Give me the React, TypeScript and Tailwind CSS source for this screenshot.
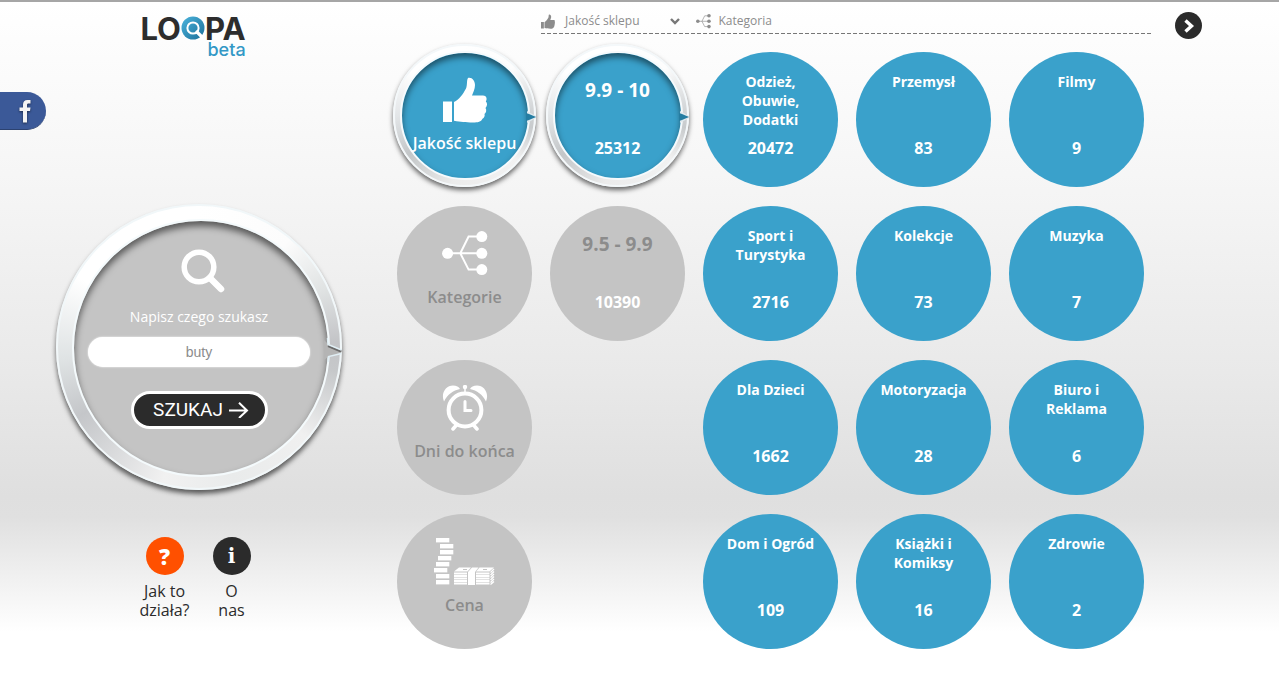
import { useState } from "react";
import clsx from "clsx";

const FACETS = [
  { id: "quality", label: "Jakość sklepu", Icon: ThumbIcon },
  { id: "category", label: "Kategorie", Icon: TreeIcon },
  { id: "days", label: "Dni do końca", Icon: ClockIcon },
  { id: "price", label: "Cena", Icon: MoneyIcon },
];

const RANGES = [
  { label: "9.9 - 10", count: 25312 },
  { label: "9.5 - 9.9", count: 10390 },
];

const CATEGORIES = [
  [
    { label: "Odzież, Obuwie, Dodatki", count: 20472 },
    { label: "Sport i Turystyka", count: 2716 },
    { label: "Dla Dzieci", count: 1662 },
    { label: "Dom i Ogród", count: 109 },
  ],
  [
    { label: "Przemysł", count: 83 },
    { label: "Kolekcje", count: 73 },
    { label: "Motoryzacja", count: 28 },
    { label: "Książki i Komiksy", count: 16 },
  ],
  [
    { label: "Filmy", count: 9 },
    { label: "Muzyka", count: 7 },
    { label: "Biuro i Reklama", count: 6 },
    { label: "Zdrowie", count: 2 },
  ],
];

function ThumbIcon({ className = "" }: { className?: string }) {
  return (
    <svg viewBox="0 0 44 46" className={className} fill="currentColor" aria-hidden="true">
      <path d="M0 24.5h9V45H0z" />
      <path d="M11 25C16 23 20 17 23 11.500C24.500 8 23.500 3 25 1C29 0 32 4 32 8C32 12 30 16 29 18.500L40 18.500C43.500 18.500 44.500 22 42.800 24.500C44.500 26 44.500 29 42.500 31C43.800 33 43.300 35.500 41.500 37C42.200 39 41 41 39.500 41.800C38 45 35 45.500 30 45.500C22 45.500 18 45 11 43.800Z" />
    </svg>
  );
}

function TreeIcon({ className = "" }: { className?: string }) {
  return (
    <svg viewBox="0 0 46 46" className={className} fill="currentColor" aria-hidden="true">
      <path d="M5.600 22.300H39.600M39.600 5.600H26.600L18.300 22.300L26.600 38.600H39.600" fill="none" stroke="currentColor" strokeWidth="2" />
      <circle cx="5.600" cy="22.300" r="5.500" />
      <circle cx="39.800" cy="5.600" r="5.500" />
      <circle cx="39.800" cy="22.300" r="5.500" />
      <circle cx="39.800" cy="38.600" r="5.500" />
    </svg>
  );
}

function ClockIcon({ className = "" }: { className?: string }) {
  return (
    <svg viewBox="0 0 46 46" className={className} fill="currentColor" aria-hidden="true">
      <circle cx="23" cy="25" r="16.400" fill="none" stroke="currentColor" strokeWidth="4" />
      <path d="M23 16.500V25.500H29" fill="none" stroke="currentColor" strokeWidth="3" strokeLinecap="round" />
      <path d="M2 16.500C-1.500 8 4 .5 11 .5C14.500 .5 17 2 18 4C11 5.500 5.500 9.500 2 16.500Z" />
      <path d="M44 16.500C47.500 8 42 .5 35 .5C31.500 .5 29 2 28 4C35 5.500 40.500 9.500 44 16.500Z" />
      <circle cx="23" cy="2" r="2.200" />
      <path d="M23 2V8" stroke="currentColor" strokeWidth="1.500" />
      <path d="M14.500 40L11 44M31.500 40L35 44" stroke="currentColor" strokeWidth="3.500" strokeLinecap="round" />
    </svg>
  );
}

function MoneyIcon({ className = "" }: { className?: string }) {
  const offsets = [2, 6, 6, 4, 2, 0, 2, 2];
  return (
    <svg viewBox="0 0 61 48" className={className} fill="currentColor" aria-hidden="true">
      {offsets.map((x, i) => (
        <rect key={i} x={x} y={1 + i * 6} width="13.300" height="4.400" />
      ))}
      <path d="M20 34.500L25 30.500H37L33.500 34.500ZM42 34.500L45.500 30.500H60L55.500 34.500Z" />
      <path d="M34 48V35L38 30.500H44.500L41 35V48Z" />
      {[35.5, 38, 40.5, 43, 45.5].map((y) => (
        <path key={y} d={`M20 ${y}h13v1.900H20zM42 ${y}h13.500v1.900H42z`} />
      ))}
      <path d="M56.500 35.500L60 32M56.500 38L60 34.500M56.500 40.500L60 37M56.500 43L60 39.500M56.500 45.500L60 42M56.500 47.500L60 44.500" stroke="currentColor" strokeWidth="1.300" />
      <path d="M29 32.500h4M49 32.500h4" stroke="#c4c4c4" strokeWidth="1" />
    </svg>
  );
}

function Logo() {
  return (
    <a href="#" aria-label="Loopa beta" className="flex flex-col items-end pr-3 font-['Inter'] leading-none">
      <span className="flex h-8 items-center text-[31px] font-bold text-[#2d2d2d]">
        LO
        <svg viewBox="0 0 24 24" className="size-6" aria-hidden="true">
          <defs>
            <linearGradient id="lens" x1="0" y1="0" x2="1" y2="1">
              <stop offset="0" stopColor="#4bb4dc" />
              <stop offset="1" stopColor="#1c6f99" />
            </linearGradient>
          </defs>
          <circle cx="12" cy="12" r="11.500" fill="url(#lens)" />
          <circle cx="12" cy="12" r="5.600" fill="none" stroke="#fff" strokeWidth="2" />
          <path d="M16 16l5 5" stroke="#fff" strokeWidth="3.200" strokeLinecap="round" />
        </svg>
        PA
      </span>
      <span className="h-3 text-lg leading-3 font-medium text-[#3398c6]">beta</span>
    </a>
  );
}

// metal ring around the selected bubble, open on the side of the next column
function SmallRing() {
  return (
    <span className="absolute -top-2 -left-1 size-[143px] rounded-full border-2 border-[#f4f8fa] bg-[conic-gradient(#fff_0deg,#fdfdfd_45deg,#d2d5d7_85deg,#c8cbcd_100deg,#f2f2f2_130deg,#ececec_190deg,#c3c6c8_235deg,#e3e6e8_270deg,#fff_310deg)] pt-[5px] pr-1 pb-[5px] pl-[5px] shadow-[0_3px_5px_rgba(0,0,0,0.6)]">
      <span className="block size-full rounded-full border-2 border-[#f6fafc] bg-[#3aa1cb] shadow-[inset_0_4px_6px_rgba(0,0,0,0.5)]" />
      <svg viewBox="0 0 10 12" className="absolute top-[65px] -right-[2px] h-3 w-[10px]" aria-hidden="true">
        <path d="M1 0L10 5V7L1 12Z" fill="#dfe9ee" />
        <path d="M0 2L3 3L10 6L3 9L0 10Z" fill="#257da2" />
      </svg>
    </span>
  );
}

function Bubble({
  tone,
  selected = false,
  onClick,
  children,
}: {
  tone: "blue" | "gray";
  selected?: boolean;
  onClick?: () => void;
  children: React.ReactNode;
}) {
  return (
    <button
      type="button"
      onClick={onClick}
      className={clsx(
        "relative size-[135px] cursor-pointer rounded-full text-center",
        selected ? "text-white" : tone === "blue" ? "bg-[#3aa1cb] text-white" : "bg-[#c4c4c4] text-[#8c8c8c]"
      )}
    >
      {selected && <SmallRing />}
      <span className="relative flex h-full flex-col items-center">{children}</span>
    </button>
  );
}

function SearchDial() {
  const [query, setQuery] = useState("buty");
  return (
    <div className="relative size-[286px] rounded-full border-2 border-[#f1f7f9] bg-[conic-gradient(#fff_0deg,#fcfcfc_40deg,#e0e3e3_65deg,#c3c4c7_88deg,#c6c8ca_100deg,#f0f0f0_130deg,#e9ebeb_165deg,#f1f1f1_195deg,#c4c6c9_240deg,#dfe3e4_265deg,#fff_300deg)] pt-[13px] pr-[10px] pb-[11px] pl-[14px] shadow-[0_4px_5px_rgba(0,0,0,0.6)]">
      <form
        onSubmit={(e) => e.preventDefault()}
        className="flex size-full flex-col items-center rounded-full border-2 border-[#f4fafc] bg-[#c4c4c4] pt-7 pr-1 shadow-[inset_0_5px_7px_rgba(0,0,0,0.55)]"
      >
        <svg viewBox="-8 0 52 44" className="h-11 w-[52px]" fill="none" stroke="#fff" strokeLinecap="round" aria-hidden="true">
          <circle cx="18" cy="18" r="14.800" strokeWidth="5.500" />
          <path d="M29 29L40 40" strokeWidth="6.500" />
        </svg>
        <label htmlFor="query" className="mt-3 text-sm leading-6 text-white">Napisz czego szukasz</label>
        <input
          id="query"
          value={query}
          onChange={(e) => setQuery(e.target.value)}
          className="mt-2 h-[30px] w-[222px] rounded-full bg-white text-center font-['Liberation_Sans'] text-sm text-[#8c8c8c] shadow-[0_0_2px_#fff] outline-none"
        />
        <button
          type="submit"
          className="mt-6 flex h-[38px] w-[137px] cursor-pointer items-center justify-center gap-1.5 rounded-full border-3 border-white bg-[#2b2b2b] pl-1 font-['Roboto'] text-[19px] text-white"
        >
          SZUKAJ
          <svg viewBox="0 0 20 16" className="h-4 w-5" fill="none" stroke="#fff" strokeWidth="2" aria-hidden="true">
            <path d="M0 8.500H18M10 .8L18 8.500L10 16" />
          </svg>
        </button>
      </form>
      <svg viewBox="0 0 18 24" className="absolute top-[132px] right-[-2px] h-6 w-[18px]" aria-hidden="true">
        <path d="M0 2L4 6L18 12V14L4 19L0 22Z" fill="#b4b4b4" />
        <path d="M4 8L17 13.500" stroke="#6a6a6a" strokeWidth="2" />
        <path d="M3.500 0L4 6.500L17.500 12M17.500 15.500L4.500 18.500L4 24" fill="none" stroke="#e0eef4" strokeWidth="1.500" />
      </svg>
    </div>
  );
}

export default function App() {
  const [facet, setFacet] = useState("quality");
  const [range, setRange] = useState("9.9 - 10");

  return (
    <div className="flex min-h-screen border-t-2 border-[#a6a6a6] bg-[linear-gradient(#fff_0px,#f5f5f5_190px,#e9e9e9_370px,#dfdfdf_495px,#e0e0e0_515px,#fff_630px)] font-['Open_Sans',sans-serif]">
      <a href="#" aria-label="Facebook" className="fixed top-[92px] left-0 flex h-[38px] w-[46px] items-center justify-center rounded-r-full border-b border-[#2c4270] bg-[#3b5998]">
        <svg viewBox="0 0 12 24" className="ml-1 h-6 w-3 drop-shadow-[0_1px_1px_rgba(0,0,0,0.5)]" aria-hidden="true">
          <path d="M11.500 1H8.500C5.500 1 4 3 4 5.500V8.500H.5V12H4V23.500H8V12H11L11.500 8.500H8V6C8 5 8.500 4.500 9.500 4.500H11.500Z" fill="#f4f4f4" />
        </svg>
      </a>

      <aside className="w-[397px] shrink-0 pl-14">
        <div className="flex w-[286px] flex-col items-center pt-[10px]">
          <div className="flex h-48 items-start">
            <Logo />
          </div>
          <SearchDial />
          <nav className="mt-[47px] flex pr-0.5 text-center text-base leading-[19px] font-medium text-[#2b2b2b]">
            <a href="#" className="flex w-[67px] flex-col items-center gap-[7px]">
              <span className="flex size-[38px] items-center justify-center rounded-full bg-[#ff5000] text-[22px] font-extrabold text-white">?</span>
              <span>Jak to<br />działa?</span>
            </a>
            <a href="#" className="flex w-[67px] flex-col items-center gap-[7px]">
              <span className="flex size-[38px] items-center justify-center rounded-full bg-[#2b2b2b] font-['DejaVu_Serif'] text-xl font-bold text-white">i</span>
              <span>O<br />nas</span>
            </a>
          </nav>
        </div>
      </aside>

      <main className="min-w-0 flex-1 pr-[77px] pb-10">
        <header className="flex h-[50px] items-start gap-[22px] pt-[10px] pl-36">
          <div className="flex-1">
            <div className="flex h-[21px] items-start text-xs leading-[18px] text-[#8c8c8c]">
              <a href="#" className="flex items-center gap-[10px]">
                <ThumbIcon className="h-[15px] w-[14px]" />
                Jakość sklepu
              </a>
              <svg viewBox="0 0 10 18" className="ml-[30px] h-[18px] w-[10px]" fill="none" stroke="#777" strokeWidth="2.400" aria-hidden="true">
                <path d="M1 7L5 11L9 7" />
              </svg>
              <a href="#" className="ml-4 flex items-center gap-2">
                <TreeIcon className="size-[15px]" />
                Kategoria
              </a>
            </div>
            <div className="h-px bg-[repeating-linear-gradient(90deg,#777_0px,#777_4px,transparent_4px,transparent_6px)]" />
          </div>
          <button type="button" aria-label="Dalej" className="flex size-[27px] items-center justify-center rounded-full bg-[#2b2b2b]">
            <svg viewBox="0 0 12 14" className="h-[14px] w-3" fill="none" stroke="#fff" strokeWidth="3.400" aria-hidden="true">
              <path d="M2.500 1.500L8.500 7L2.500 12.500" />
            </svg>
          </button>
        </header>

        <div className="flex gap-[18px]">
          <div className="flex flex-col gap-[19px]">
            {FACETS.map(({ id, label, Icon }) => (
              <Bubble key={id} tone="gray" selected={facet === id} onClick={() => setFacet(id)}>
                <span className="flex h-[71px] items-end justify-center text-white">
                  <Icon className={id === "price" ? "h-12 w-[61px]" : "h-[46px] w-[46px]"} />
                </span>
                <span className="mt-[9px] text-base leading-[22px] font-semibold whitespace-nowrap">{label}</span>
              </Bubble>
            ))}
          </div>

          <div className="flex flex-col gap-[19px]">
            {RANGES.map((r) => (
              <Bubble key={r.label} tone="gray" selected={range === r.label} onClick={() => setRange(r.label)}>
                <span className="h-[86px] pt-5 text-[19px] leading-9 font-bold">{r.label}</span>
                <span className="text-base leading-5 font-bold text-white">{r.count}</span>
              </Bubble>
            ))}
          </div>

          {CATEGORIES.map((column, i) => (
            <div key={i} className="flex flex-col gap-[19px]">
              {column.map((c) => (
                <Bubble key={c.label} tone="blue">
                  <span className="h-[86px] w-[94px] pt-5 text-sm leading-[19px] font-bold">
                    {c.label}
                  </span>
                  <span className="text-base leading-5 font-bold">{c.count}</span>
                </Bubble>
              ))}
            </div>
          ))}
        </div>
      </main>
    </div>
  );
}
